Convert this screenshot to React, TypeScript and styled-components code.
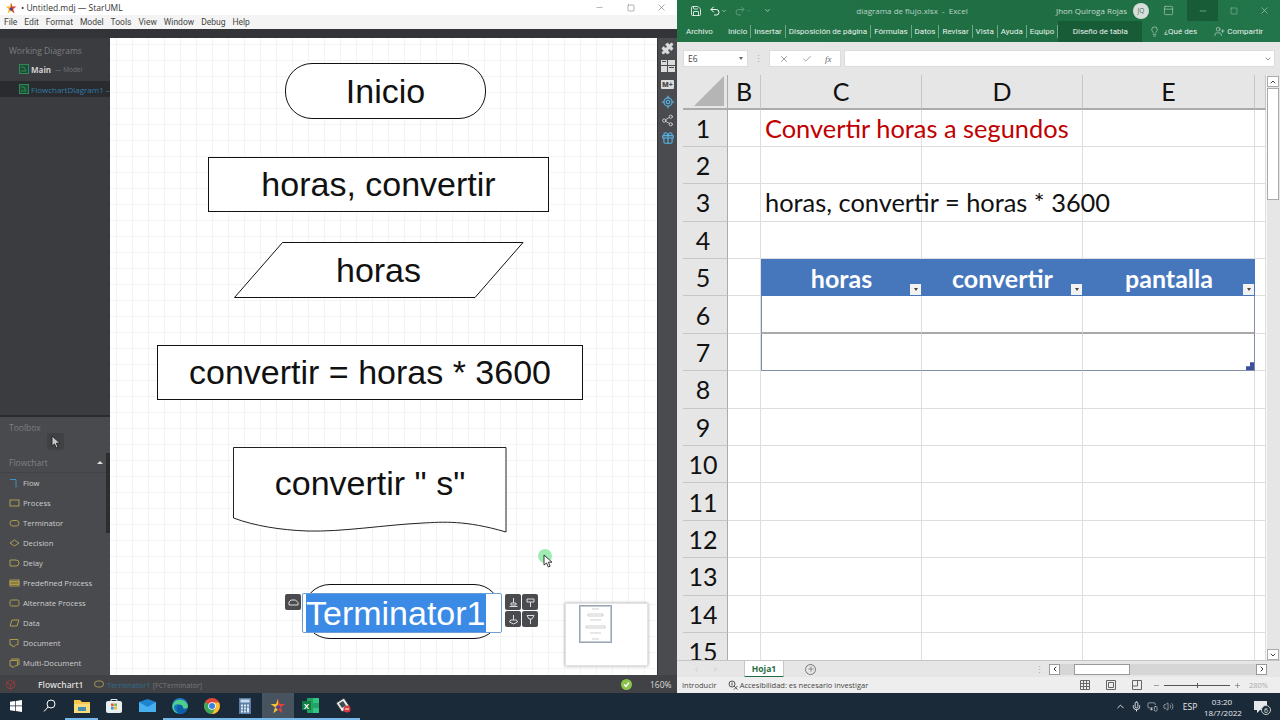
import React from 'react';
import styled, { createGlobalStyle } from 'styled-components';
import {
  Check,
  ChevronUp,
  ChevronDown,
  ChevronLeft,
  ChevronRight,
  Gift,
  Lightbulb,
  LocateFixed,
  Mic,
  Minus,
  MonitorSmartphone,
  PanelTop,
  Plus,
  Puzzle,
  Redo2,
  Save,
  Share2,
  Square,
  UserPlus,
  Undo2,
  Volume2,
  X,
} from 'lucide-react';

const GlobalStyle = createGlobalStyle`
  html, body {
    margin: 0;
    padding: 0;
    width: 1280px;
    height: 720px;
    overflow: hidden;
    font-family: "Open Sans", "Liberation Sans", sans-serif;
  }
  * { box-sizing: border-box; }
`;

const Screen = styled.div`
  width: 1280px;
  height: 720px;
  display: flex;
  flex-direction: column;
  overflow: hidden;
`;

const Desktop = styled.div`
  height: 693px;
  display: flex;
`;

/* ---------- StarUML window ---------- */

const UmlWindow = styled.div`
  width: 677px;
  display: flex;
  flex-direction: column;
  background: #fff;
`;

const UmlTitle = styled.div`
  height: 15px;
  display: flex;
  align-items: center;
  padding-left: 5px;
  gap: 4px;
  font-size: 8.5px;
  color: #333;
  background: #fff;
`;

const WinButtons = styled.div`
  margin-left: auto;
  display: flex;
  color: #444;
`;

const WinButton = styled.span`
  width: 31px;
  height: 10px;
  display: flex;
  align-items: center;
  justify-content: center;
`;

const UmlMenu = styled.div`
  height: 14px;
  display: flex;
  align-items: center;
  gap: 7px;
  padding-left: 4px;
  font-family: Roboto, "Open Sans", sans-serif;
  font-size: 8.5px;
  color: #444;
  background: #f4f4f4;
`;

const UmlGap = styled.div`
  height: 9px;
  background: #333437;
`;

const UmlBody = styled.div`
  flex: 1;
  display: flex;
  min-height: 0;
`;

const Sidebar = styled.div`
  width: 110px;
  display: flex;
  flex-direction: column;
`;

const WorkingPane = styled.div`
  height: 379px;
  padding-top: 5px;
  background: #3a3c3f;
  border-bottom: 2px solid #2b2c2e;
`;

const PaneTitle = styled.div`
  height: 15px;
  display: flex;
  align-items: center;
  justify-content: space-between;
  padding: 0 9px;
  font-size: 8.5px;
  color: #7c7e81;
`;

const WorkRow = styled.div<{ $active?: boolean }>`
  height: 16px;
  margin-top: ${(p) => (p.$active ? '4px' : '3px')};
  display: flex;
  align-items: center;
  gap: 2px;
  padding-left: 19px;
  font-size: 8px;
  white-space: nowrap;
  overflow: hidden;
  color: ${(p) => (p.$active ? '#2f7ca8' : '#cfcfcf')};
  background: ${(p) => (p.$active ? '#2a2b2e' : 'transparent')};

  svg {
    flex-shrink: 0;
  }
  b {
    font-weight: 700;
  }
  small {
    font-size: 6.5px;
    color: #737578;
    margin-left: 2px;
  }
`;

const ToolPane = styled.div`
  position: relative;
  flex: 1;
  padding-top: 3px;
  background: #494a4d;
`;

const ArrowTool = styled.div`
  width: 17px;
  height: 17px;
  margin: -2px 0 2px 47px;
  display: flex;
  align-items: center;
  justify-content: center;
  border-radius: 2px;
  background: #404144;
`;

const GroupHead = styled.div`
  height: 21px;
  display: flex;
  align-items: center;
  justify-content: space-between;
  padding: 0 7px 0 9px;
  font-size: 8.5px;
  color: #7e8083;
  border-bottom: 1px solid #424346;
  i {
    width: 0;
    height: 0;
    border: 3px solid transparent;
    border-top: 0;
    border-bottom: 3px solid #ddd;
  }
`;

const ToolItem = styled.div`
  height: 20px;
  display: flex;
  align-items: center;
  gap: 3px;
  padding-left: 9px;
  font-size: 7.7px;
  color: #cdcdcd;
  white-space: nowrap;
`;

const ToolThumb = styled.div`
  position: absolute;
  right: 0;
  top: 36px;
  width: 4px;
  height: 80px;
  background: #2d2e30;
`;

const Canvas = styled.div`
  position: relative;
  flex: 1;
  overflow: hidden;
  background-color: #fff;
  background-image: linear-gradient(#f4f4f4 1px, transparent 1px), linear-gradient(90deg, #f4f4f4 1px, transparent 1px);
  background-size: 16px 16px;
  background-position: 6px 6px;
`;

/* node positions are diagram coordinates, relative to the canvas */
const Node = styled.div<{ $x: number; $y: number; $w: number; $h: number; $round?: boolean; $plain?: boolean }>`
  position: absolute;
  left: ${(p) => p.$x}px;
  top: ${(p) => p.$y}px;
  width: ${(p) => p.$w}px;
  height: ${(p) => p.$h}px;
  display: flex;
  align-items: center;
  justify-content: center;
  font-family: "Liberation Sans", Arial, sans-serif;
  font-size: 34px;
  color: #111;
  background: ${(p) => (p.$plain ? 'transparent' : '#fff')};
  border: ${(p) => (p.$plain ? '0' : '1px solid #111')};
  border-radius: ${(p) => (p.$round ? '27px' : '0')};
  svg {
    position: absolute;
    left: 0;
    top: 0;
  }
`;

const NodeLabel = styled.span<{ $up?: number }>`
  position: relative;
  margin-top: ${(p) => -(p.$up ?? 0)}px;
`;

const NodeEditor = styled.div`
  position: absolute;
  left: 192px;
  top: 555px;
  width: 200px;
  height: 40px;
  padding-left: 3px;
  display: flex;
  align-items: center;
  background: #fff;
  border: 1px solid #6f9fd0;
  border-radius: 2px;
  font-family: "Liberation Sans", Arial, sans-serif;
  font-size: 34px;
  span {
    height: 38px;
    line-height: 38px;
    color: #fff;
    background: #3b8ae6;
  }
`;

const Handle = styled.div<{ $x: number; $y: number }>`
  position: absolute;
  left: ${(p) => p.$x}px;
  top: ${(p) => p.$y}px;
  width: 16px;
  height: 16px;
  display: flex;
  align-items: center;
  justify-content: center;
  background: #4a4b4e;
  border-radius: 2px;
`;

const Minimap = styled.div`
  position: absolute;
  left: 455px;
  top: 565px;
  width: 83px;
  height: 63px;
  background: #fff;
  border: 1px solid #e3e3e3;
  box-shadow: 0 0 3px rgba(0, 0, 0, 0.35);
`;

const MinimapView = styled.div`
  position: absolute;
  left: 13px;
  top: 1px;
  width: 33px;
  height: 38px;
  border: 1px solid #9aa7b3;
  box-shadow: inset 0 0 0 1px #c3ccd4;
`;

const Cursor = styled.div`
  position: absolute;
  left: 428px;
  top: 511px;
  width: 14px;
  height: 14px;
  border-radius: 50%;
  background: #a0ecb5;
  svg {
    position: absolute;
    left: 5px;
    top: 5px;
  }
`;

const IconStrip = styled.div`
  width: 20px;
  display: flex;
  flex-direction: column;
  align-items: center;
  padding-top: 1px;
  background: #4a4b4e;
  border-left: 1px solid #333;
`;

const StripIcon = styled.div<{ $blue?: boolean }>`
  height: 18px;
  width: 100%;
  display: flex;
  align-items: center;
  justify-content: center;
  color: ${(p) => (p.$blue ? '#57b3e6' : '#dcdcdc')};
`;

const MdBadge = styled.span`
  padding: 0 1px;
  font-size: 7px;
  line-height: 9px;
  font-weight: 800;
  color: #4a4b4e;
  background: #dcdcdc;
  border-radius: 1px;
`;

const UmlStatus = styled.div`
  height: 18px;
  display: flex;
  align-items: center;
  font-size: 8.5px;
  color: #ddd;
  background: #414245;
`;

const StatusCell = styled.div<{ $w?: number; $end?: boolean }>`
  display: flex;
  align-items: center;
  gap: 3px;
  height: 100%;
  padding: 0 5px;
  ${(p) => (p.$w ? `width: ${p.$w}px;` : '')}
  ${(p) => (p.$end ? 'margin-left: auto;' : '')}
  b { font-weight: 600; }
  em { font-style: normal; color: #2f6d94; font-size: 7.5px; }
  small { color: #77797c; font-size: 7px; }
`;

/* ---------- Excel window ---------- */

const XlWindow = styled.div`
  width: 603px;
  display: flex;
  flex-direction: column;
  background: #e6e6e6;
`;

const Ribbon = styled.div`
  height: 42px;
  background: linear-gradient(90deg, #217346 0%, #1f6e43 60%, #22754a 100%);
  color: #e8f1ec;
`;

const RibbonTop = styled.div`
  height: 21px;
  display: flex;
  align-items: center;
  padding-left: 13px;
`;

const Quick = styled.span<{ $w: number; $dim?: boolean }>`
  width: ${(p) => p.$w}px;
  display: flex;
  align-items: center;
  color: ${(p) => (p.$dim ? '#5d9c78' : '#fff')};
`;

const DocTitle = styled.div`
  width: 240px;
  margin-left: 16px;
  text-align: center;
  font-size: 8px;
  color: #b9d5c5;
  white-space: nowrap;
`;

const UserName = styled.div`
  margin-left: 24px;
  width: 75px;
  font-size: 8px;
  color: #c6dccf;
  white-space: nowrap;
`;

const Avatar = styled.div`
  width: 16px;
  height: 16px;
  margin-left: 2px;
  display: flex;
  align-items: center;
  justify-content: center;
  border-radius: 50%;
  font-size: 6.5px;
  color: #4d6b5a;
  background: #d6dfda;
`;

const TopControl = styled.div<{ $w?: number; $dark?: boolean }>`
  width: ${(p) => p.$w ?? 31}px;
  height: 21px;
  display: flex;
  align-items: center;
  justify-content: center;
  color: #c6dccf;
  background: ${(p) => (p.$dark ? '#185c37' : 'transparent')};
`;

const RibbonTabs = styled.div`
  height: 21px;
  display: flex;
  align-items: center;
  padding-left: 6px;
  font-family: Roboto, "Open Sans", sans-serif;
  font-size: 8px;
  white-space: nowrap;
`;

const RibbonTab = styled.div<{ $sep?: boolean; $w?: number }>`
  ${(p) => (p.$w ? `width: ${p.$w}px;` : '')}
  height: 13px;
  line-height: 13px;
  padding: 0 3px;
  ${(p) => (p.$sep ? 'border-right: 1px solid #6fa78a;' : '')}
`;

const ContextTab = styled.div`
  width: 84px;
  height: 21px;
  display: flex;
  align-items: center;
  justify-content: center;
  background: #185c37;
`;

const RibbonAction = styled.div<{ $w: number; $pad: number }>`
  width: ${(p) => p.$w}px;
  display: flex;
  align-items: center;
  gap: 2px;
  padding-left: ${(p) => p.$pad}px;
`;

const FormulaBar = styled.div`
  height: 33px;
  display: flex;
  align-items: center;
  padding: 0 5px 0 6px;
  font-size: 8.5px;
  color: #444;
`;

const NameBox = styled.div`
  width: 65px;
  height: 17px;
  display: flex;
  align-items: center;
  justify-content: space-between;
  padding: 0 4px;
  background: #fff;
  border: 1px solid #dcdcdc;
  i {
    width: 0;
    height: 0;
    border: 2.5px solid transparent;
    border-bottom: 0;
    border-top: 3px solid #666;
  }
`;

const Dots = styled.div`
  width: 21px;
  text-align: center;
  font-size: 9px;
  line-height: 9px;
  color: #aaa;
`;

const FxButtons = styled.div`
  width: 72px;
  height: 17px;
  display: flex;
  align-items: center;
  justify-content: space-around;
  padding: 0 2px;
  background: #fff;
  border: 1px solid #dcdcdc;
  color: #666;
  em {
    font-family: "Liberation Serif", serif;
    font-size: 9px;
  }
`;

const FormulaInput = styled.div`
  flex: 1;
  height: 17px;
  margin-left: 3px;
  display: flex;
  align-items: center;
  justify-content: flex-end;
  padding-right: 2px;
  color: #555;
  background: #fff;
  border: 1px solid #dcdcdc;
`;

const SheetArea = styled.div`
  height: 585px;
  display: flex;
`;

const Sheet = styled.div`
  flex: 1;
  overflow: hidden;
  padding-left: 6px;
  display: grid;
  grid-template-columns: 45px 33px 161px 161px 172px 11px;
  grid-template-rows: 34.5px;
  grid-auto-rows: 37.4px;
  font-family: Lato, "Open Sans", sans-serif;
  font-size: 25px;
  color: #111;
  background: #e6e6e6;
`;

const Corner = styled.div`
  position: relative;
  background: #e6e6e6;
  border-right: 1px solid #ababab;
  border-bottom: 2px solid #ababab;
  &::after {
    content: '';
    position: absolute;
    right: 3px;
    bottom: 2px;
    width: 0;
    height: 0;
    border-left: 30px solid transparent;
    border-bottom: 30px solid #b5b5b5;
  }
`;

const ColHead = styled.div`
  display: flex;
  align-items: center;
  justify-content: center;
  background: #e6e6e6;
  border-right: 1px solid #c6c6c6;
  border-bottom: 2px solid #ababab;
`;

const RowHead = styled.div`
  display: flex;
  align-items: center;
  justify-content: center;
  padding-right: 4px;
  background: #e6e6e6;
  border-right: 1px solid #ababab;
  border-bottom: 1px solid #c6c6c6;
`;

const Cell = styled.div<{ $red?: boolean; $left?: boolean; $right?: boolean; $under?: string; $tall?: boolean; $spill?: boolean }>`
  position: relative;
  ${(p) => (p.$spill ? 'z-index: 1; font-size: 25.4px;' : '')}
  display: flex;
  align-items: center;
  padding-left: 4px;
  white-space: nowrap;
  background: #fff;
  color: ${(p) => (p.$red ? '#c00000' : '#111')};
  border-right: 1px solid ${(p) => (p.$right ? '#7f8ea3' : '#dedede')};
  border-bottom: ${(p) => (p.$tall ? '2px' : '1px')} solid ${(p) => p.$under ?? '#dedede'};
  ${(p) => (p.$left ? 'border-left: 1px solid #7f8ea3;' : '')}
`;

const HeadCell = styled.div`
  position: relative;
  display: flex;
  align-items: center;
  justify-content: center;
  font-weight: 700;
  color: #fff;
  background: #4677bd;
`;

const FilterButton = styled.span`
  position: absolute;
  right: 1px;
  bottom: 1px;
  width: 11px;
  height: 11px;
  display: flex;
  align-items: center;
  justify-content: center;
  background: #f2f2f2;
  &::after {
    content: '';
    border: 2.5px solid transparent;
    border-bottom: 0;
    border-top: 3px solid #444;
  }
`;

const ResizeCorner = styled.span`
  position: absolute;
  right: 0;
  bottom: 0;
  width: 8px;
  height: 8px;
  background: #3d4f9f;
  clip-path: polygon(100% 0, 100% 100%, 0 100%, 0 50%, 50% 50%, 50% 0);
`;

const VScroll = styled.div`
  width: 14px;
  display: flex;
  flex-direction: column;
  padding: 1px 1px 0 0;
  background: #e6e6e6;
  border-left: 1px solid #f7f7f7;
`;

const ScrollButton = styled.div`
  height: 11px;
  display: flex;
  align-items: center;
  justify-content: center;
  color: #444;
  background: #fff;
  border: 1px solid #aaa;
`;

const VThumb = styled.div`
  height: 112px;
  margin: 1px 0 auto;
  background: #fff;
  border: 1px solid #aaa;
`;

const SheetTabs = styled.div`
  height: 17px;
  display: flex;
  align-items: center;
  padding-left: 10px;
  font-size: 8.5px;
  color: #555;
  border-top: 1px solid #c6c6c6;
`;

const SheetNav = styled.span`
  width: 19px;
  display: flex;
  justify-content: center;
  color: #b9b9b9;
`;

const HojaTab = styled.div`
  width: 40px;
  height: 17px;
  margin-left: 19px;
  display: flex;
  align-items: center;
  justify-content: center;
  font-weight: 700;
  color: #1f6e43;
  background: #fff;
  border: 1px solid #c6c6c6;
  border-top: 0;
  border-bottom: 2px solid #1f6e43;
`;

const AddSheet = styled.div`
  width: 11px;
  height: 11px;
  margin-left: 21px;
  display: flex;
  align-items: center;
  justify-content: center;
  border: 1px solid #777;
  border-radius: 50%;
  color: #666;
`;

const TabDots = styled.span`
  margin-left: auto;
  width: 12px;
  text-align: center;
  font-size: 9px;
  line-height: 9px;
  color: #aaa;
`;

const HScroll = styled.div`
  margin-left: 4px;
  margin-right: 13px;
  width: 218px;
  height: 11px;
  display: flex;
  background: #d6d6d6;
`;

const HButton = styled.div`
  width: 11px;
  height: 11px;
  display: flex;
  align-items: center;
  justify-content: center;
  background: #fff;
  border: 1px solid #999;
  color: #333;
`;

const HThumb = styled.div`
  width: 56px;
  margin-left: 14px;
  margin-right: auto;
  background: #fff;
  border: 1px solid #999;
`;

const XlStatus = styled.div`
  height: 16px;
  display: flex;
  align-items: center;
  padding-left: 5px;
  font-size: 7.5px;
  color: #444;
  background: #eee;
`;

const A11yIcon = styled.svg`
  margin: 0 2px 0 11px;
`;

const StatusTools = styled.div`
  margin-left: auto;
  display: flex;
  align-items: center;
  padding-right: 9px;
  color: #666;
`;

const ViewIcon = styled.span`
  width: 26px;
  display: flex;
  align-items: center;
  justify-content: center;
`;

const ZoomMinus = styled.span`
  margin-left: 3px;
  display: flex;
`;

const ZoomTrack = styled.div`
  position: relative;
  width: 66px;
  height: 1px;
  margin: 0 4px;
  background: #555;
  &::after {
    content: '';
    position: absolute;
    left: 33px;
    top: -2px;
    width: 1px;
    height: 5px;
    background: #555;
  }
`;

const ZoomLabel = styled.span`
  width: 30px;
  padding-left: 8px;
  color: #aaa;
`;

/* ---------- Taskbar ---------- */

const Taskbar = styled.div`
  height: 27px;
  display: flex;
  align-items: stretch;
  background: #1b2a39;
  color: #e6e9ec;
`;

const TaskItem = styled.div<{ $open?: boolean; $active?: boolean }>`
  width: 32.7px;
  display: flex;
  align-items: center;
  justify-content: center;
  background: ${(p) => (p.$active ? '#47545f' : 'transparent')};
  border-bottom: 2px solid ${(p) => (p.$open ? '#76b9ed' : 'transparent')};
  background-clip: padding-box;
`;

const Tray = styled.div`
  margin-left: auto;
  display: flex;
  align-items: center;
  font-size: 8.5px;
`;

const TrayIcon = styled.span<{ $w: number }>`
  width: ${(p) => p.$w}px;
  display: flex;
  align-items: center;
  justify-content: center;
`;

const Clock = styled.div`
  width: 36px;
  text-align: center;
  white-space: nowrap;
  line-height: 11px;
  font-size: 8px;
`;

const Notify = styled.div`
  position: relative;
  width: 40px;
  display: flex;
  justify-content: center;
  b {
    position: absolute;
    left: 21px;
    top: 4px;
    width: 10px;
    height: 10px;
    line-height: 9px;
    text-align: center;
    font-weight: 400;
    font-size: 7px;
    border: 1px solid #ccc;
    border-radius: 50%;
    background: #1b2a39;
  }
`;

/* ---------- drawings ---------- */

const StarLogo = ({ size = 14 }: { size?: number }) => (
  <svg width={size} height={size} viewBox="0 0 24 24">
    <path d="M12 1l3 8h8l-6.500 5 2.500 9-7-5.500z" fill="#d8433a" />
    <path d="M12 1l-3 8H1l6.500 5L5 23l7-5.500z" fill="#f2c230" />
    <path d="M12 10l4 4-4 4-4-4z" fill="#5b3f8f" />
  </svg>
);

const DiagramIcon = () => (
  <svg width="10" height="10" viewBox="0 0 10 10" fill="none" stroke="#2f8a57" strokeWidth="1">
    <rect x="0.500" y="0.500" width="9" height="9" fill="#1d4d35" />
    <path d="M2 3h3M5 3l2 4M2 7h5" />
  </svg>
);

const PanelsGlyph = () => (
  <svg width="14" height="12" viewBox="0 0 14 12" fill="#dcdcdc">
    <path d="M0 0h6v5H0zM7 0h7v5H7zM0 6h6v6H0zM7 6h7v6H7z" />
    <path d="M1 1h4v1H1zM8 7h5v1H8z" fill="#4a4b4e" />
  </svg>
);

const toolShapes: Record<string, React.ReactNode> = {
  Flow: <path d="M1 1.500h6v8" stroke="#3f8fc9" />,
  Process: <rect x="1" y="2" width="9" height="6" />,
  Terminator: <rect x="1" y="2.500" width="9" height="5.500" rx="2.700" />,
  Decision: <path d="M1 5l4.500-3L10 5l-4.500 3z" />,
  Delay: <path d="M1 2h6a3 3 0 010 6H1z" />,
  'Predefined Process': (
    <>
      <rect x="1" y="2" width="9" height="6" />
      <path d="M1 3.500h9v3H1z" fill="#8c7d3a" />
    </>
  ),
  'Alternate Process': <rect x="1" y="2" width="9" height="6" rx="1.500" />,
  Data: <path d="M3 2h7L8 8H1z" />,
  Document: <path d="M1 1.500h8v5c-3 0-3 2-5 2.500L3 7H1z" />,
  'Multi-Document': <path d="M2 1h8v6M1 2.500h7.500v5c-3 0-3 1.500-5 2L3 8H1z" />,
};

const toolNames = Object.keys(toolShapes);

const ToolGlyph = ({ name }: { name: string }) => (
  <svg width="11" height="11" viewBox="0 0 11 11" fill="none" stroke="#ad9c4e" strokeWidth="1">
    {toolShapes[name]}
  </svg>
);

const HandleGlyph = ({ d }: { d: string }) => (
  <svg width="11" height="11" viewBox="0 0 11 11" fill="none" stroke="#ddd" strokeWidth="1">
    <path d={d} />
  </svg>
);

const WinLogo = () => (
  <svg width="12" height="12" viewBox="0 0 12 12" fill="#fff">
    <path d="M0 1.700l5-.7v4.600H0zM5.700.900L12 0v5.600H5.700zM0 6.300h5v4.700l-5-.7zM5.700 6.300H12V12l-6.300-.9z" />
  </svg>
);

const SearchGlyph = () => (
  <svg width="13" height="13" viewBox="0 0 13 13" fill="none" stroke="#fff" strokeWidth="1">
    <circle cx="8" cy="5" r="4" />
    <path d="M5 8l-4 4.500" />
  </svg>
);

const FolderGlyph = () => (
  <svg width="16" height="14" viewBox="0 0 16 14">
    <path d="M0 1h6l2 2h8v11H0z" fill="#f6c64f" />
    <path d="M0 5h16v9H0z" fill="#fbdc7a" />
    <path d="M4 8h8v4H4z" fill="#3f8fb7" />
  </svg>
);

const StoreGlyph = () => (
  <svg width="16" height="15" viewBox="0 0 16 15">
    <path d="M5 3V1.500h6V3" fill="none" stroke="#dfe6ea" />
    <rect y="3" width="16" height="12" rx="2" fill="#e9eef1" />
    <rect x="5" y="5.500" width="2.700" height="2.700" fill="#e8562f" />
    <rect x="8.300" y="5.500" width="2.700" height="2.700" fill="#7cb83b" />
    <rect x="5" y="8.800" width="2.700" height="2.700" fill="#2c9be0" />
    <rect x="8.300" y="8.800" width="2.700" height="2.700" fill="#f4b81c" />
  </svg>
);

const MailGlyph = () => (
  <svg width="17" height="13" viewBox="0 0 17 13">
    <path d="M0 3l8.500-3L17 3v10H0z" fill="#1f84d0" />
    <path d="M0 3l8.500 5L17 3v10H0z" fill="#48b0ef" />
  </svg>
);

const EdgeGlyph = () => (
  <svg width="16" height="16" viewBox="0 0 16 16">
    <circle cx="8" cy="8" r="8" fill="#1a78c2" />
    <path d="M1 6c2-6 13-6 15 2 0 3-4 3-5 1.500C10 7 6 5 3 7c-2 2-1 6 3 8C2 15-1 10 1 6z" fill="#4fd08a" />
    <path d="M5 9c1-3 6-3 6 1-2 1 3 2 4 .5C14 14 11 16 8 15.800 5 15 4 12 5 9z" fill="#0d5fa8" />
  </svg>
);

const ChromeGlyph = () => (
  <svg width="16" height="16" viewBox="0 0 16 16">
    <circle cx="8" cy="8" r="8" fill="#e2483a" />
    <path d="M8 8L1.100 4A8 8 0 008 16l3.500-6z" fill="#3aa757" />
    <path d="M8 4.500h7A8 8 0 018 16l3.500-6z" fill="#f9c32c" />
    <circle cx="8" cy="8" r="3.800" fill="#fff" />
    <circle cx="8" cy="8" r="3" fill="#3a80ea" />
  </svg>
);

const CalcGlyph = () => (
  <svg width="12" height="16" viewBox="0 0 12 16">
    <rect width="12" height="16" fill="#5d7ea6" />
    <rect x="1.500" y="1.500" width="9" height="3" fill="#c7ddf0" />
    <path d="M2 6.500h2v2H2zM5 6.500h2v2H5zM8 6.500h2v2H8zM2 9.500h2v2H2zM5 9.500h2v2H5zM8 9.500h2v5H8zM2 12.500h2v2H2zM5 12.500h2v2H5z" fill="#dce8f2" />
  </svg>
);

const ExcelGlyph = () => (
  <svg width="17" height="15" viewBox="0 0 17 15">
    <rect x="5" width="12" height="15" rx="1" fill="#21a366" />
    <path d="M11 0h6v5h-6zM11 10h6v5h-6z" fill="#33c481" />
    <rect y="3" width="9" height="9" fill="#107c41" />
    <text x="4.500" y="10.500" textAnchor="middle" fontSize="8" fontWeight="700" fill="#fff" fontFamily="Liberation Sans">
      X
    </text>
  </svg>
);

const SnipGlyph = () => (
  <svg width="16" height="15" viewBox="0 0 16 15">
    <path d="M1 5l8-5 6 9-8 5z" fill="#e9ecee" stroke="#333" />
    <path d="M4 5.500l4-2.500 3 4.500-4 2.500z" fill="#3a4f52" />
    <circle cx="12" cy="11" r="3.500" fill="#d63a3a" />
    <path d="M10 11h4" stroke="#fff" />
  </svg>
);

const ArrowCursor = ({ fill = '#fff' }: { fill?: string }) => (
  <svg width="10" height="14" viewBox="0 0 10 14">
    <path d="M1 1v10l2.500-2 1.800 4 1.800-.8-1.800-4H9z" fill={fill} stroke="#222" strokeWidth="0.900" />
  </svg>
);

/* ---------- data ---------- */

const menuItems = ['File', 'Edit', 'Format', 'Model', 'Tools', 'View', 'Window', 'Debug', 'Help'];
const ribbonTabs: { label: string; w?: number; sep?: boolean }[] = [
  { label: 'Archivo', w: 42 },
  { label: 'Inicio', sep: true },
  { label: 'Insertar', sep: true },
  { label: 'Disposición de página', sep: true },
  { label: 'Fórmulas', sep: true },
  { label: 'Datos', sep: true },
  { label: 'Revisar', sep: true },
  { label: 'Vista', sep: true },
  { label: 'Ayuda', sep: true },
  { label: 'Equipo', sep: true },
];
const columns = ['B', 'C', 'D', 'E', ''];
const rowNumbers = Array.from({ length: 15 }, (_, i) => i + 1);
const tableHeads = ['horas', 'convertir', 'pantalla'];

const SheetRow = ({ n }: { n: number }) => {
  if (n === 5) {
    return (
      <>
        <RowHead>{n}</RowHead>
        <Cell />
        {tableHeads.map((h) => (
          <HeadCell key={h}>
            {h}
            <FilterButton />
          </HeadCell>
        ))}
        <Cell />
      </>
    );
  }
  if (n === 6 || n === 7) {
    const under = n === 6 ? '#a9a9a9' : '#7f8ea3';
    return (
      <>
        <RowHead>{n}</RowHead>
        <Cell />
        <Cell $left $under={under} $tall={n === 6} />
        <Cell $under={under} $tall={n === 6} />
        <Cell $right $under={under} $tall={n === 6}>
          {n === 7 && <ResizeCorner />}
        </Cell>
        <Cell />
      </>
    );
  }
  const text = n === 1 ? 'Convertir horas a segundos' : n === 3 ? 'horas, convertir = horas * 3600' : '';
  return (
    <>
      <RowHead>{n}</RowHead>
      <Cell />
      <Cell $red={n === 1} $spill={!!text}>
        {text}
      </Cell>
      <Cell />
      <Cell />
      <Cell />
    </>
  );
};

const App = () => {
  return (
    <Screen>
      <GlobalStyle />
      <Desktop>
        <UmlWindow>
          <UmlTitle>
            <StarLogo size={12} />
            <span>• Untitled.mdj — StarUML</span>
            <WinButtons>
              <WinButton>
                <Minus size={9} strokeWidth={1} />
              </WinButton>
              <WinButton>
                <Square size={8} strokeWidth={1.200} />
              </WinButton>
              <WinButton>
                <X size={11} strokeWidth={1} />
              </WinButton>
            </WinButtons>
          </UmlTitle>
          <UmlMenu>
            {menuItems.map((m) => (
              <span key={m}>{m}</span>
            ))}
          </UmlMenu>
          <UmlGap />
          <UmlBody>
            <Sidebar>
              <WorkingPane>
                <PaneTitle>Working Diagrams</PaneTitle>
                <WorkRow>
                  <DiagramIcon />
                  <b>Main</b>
                  <small>— Model</small>
                </WorkRow>
                <WorkRow $active>
                  <DiagramIcon />
                  <span>FlowchartDiagram1 —</span>
                </WorkRow>
              </WorkingPane>
              <ToolPane>
                <PaneTitle>Toolbox</PaneTitle>
                <ArrowTool>
                  <ArrowCursor fill="#c9c9c9" />
                </ArrowTool>
                <GroupHead>
                  Flowchart
                  <i />
                </GroupHead>
                {toolNames.map((t) => (
                  <ToolItem key={t}>
                    <ToolGlyph name={t} />
                    {t}
                  </ToolItem>
                ))}
                <ToolThumb />
              </ToolPane>
            </Sidebar>
            <Canvas>
              <Node $x={175} $y={25} $w={201} $h={56} $round>
                <NodeLabel>Inicio</NodeLabel>
              </Node>
              <Node $x={98} $y={119} $w={341} $h={55}>
                <NodeLabel>horas, convertir</NodeLabel>
              </Node>
              <Node $x={123} $y={204} $w={291} $h={56} $plain>
                <svg width="291" height="56" viewBox="0 0 291 56">
                  <path d="M49.500.500H290L242 55.500H1.500z" fill="#fff" stroke="#111" />
                </svg>
                <NodeLabel>horas</NodeLabel>
              </Node>
              <Node $x={47} $y={307} $w={426} $h={55}>
                <NodeLabel>convertir = horas * 3600</NodeLabel>
              </Node>
              <Node $x={123} $y={409} $w={274} $h={86} $plain>
                <svg width="274" height="86" viewBox="0 0 274 86">
                  <path
                    d="M.500.500H273V85C232 73 210 75 190 76 150 78 110 85 74 84 48 83 22 79 .500 71z"
                    fill="#fff"
                    stroke="#222"
                  />
                </svg>
                <NodeLabel $up={14}>convertir " s"</NodeLabel>
              </Node>
              <Node $x={193} $y={546} $w={198} $h={55} $round />
              <NodeEditor>
                <span>Terminator1</span>
              </NodeEditor>
              <Handle $x={175} $y={556}>
                <HandleGlyph d="M1 8h9V5.500L7.500 3H3L1 5z" />
              </Handle>
              <Handle $x={395} $y={556}>
                <HandleGlyph d="M5.500 1v5M3 6h5v2H3zM1.500 9.500h8" />
              </Handle>
              <Handle $x={412} $y={556}>
                <HandleGlyph d="M2 2h7v3H2zM5.500 5v5" />
              </Handle>
              <Handle $x={395} $y={573}>
                <HandleGlyph d="M5.500 1v5M2.500 6h6l1 2-4 2-4-2z" />
              </Handle>
              <Handle $x={412} $y={573}>
                <HandleGlyph d="M2 1.500h7L7 5H4zM5.500 5v5" />
              </Handle>
              <Minimap>
                <MinimapView>
                  <svg width="31" height="36" viewBox="0 0 31 36" fill="none" stroke="#bbb" strokeWidth="0.700">
                    <path d="M12 3h7M8 8h15v2H8zM10 14h11M6 20h19v2H6zM10 27h11M12 33h7" />
                  </svg>
                </MinimapView>
              </Minimap>
              <Cursor>
                <ArrowCursor />
              </Cursor>
            </Canvas>
            <IconStrip>
              <StripIcon>
                <Puzzle size={13} fill="#dcdcdc" strokeWidth={1} />
              </StripIcon>
              <StripIcon>
                <PanelsGlyph />
              </StripIcon>
              <StripIcon>
                <MdBadge>M+</MdBadge>
              </StripIcon>
              <StripIcon $blue>
                <LocateFixed size={14} strokeWidth={2} />
              </StripIcon>
              <StripIcon>
                <Share2 size={13} strokeWidth={1.500} />
              </StripIcon>
              <StripIcon $blue>
                <Gift size={14} strokeWidth={2} />
              </StripIcon>
            </IconStrip>
          </UmlBody>
          <UmlStatus>
            <StatusCell $w={33}>
              <svg width="11" height="11" viewBox="0 0 12 12" fill="none" stroke="#9c3b3b" strokeWidth="1">
                <path d="M6 1l4.500 2.500v5L6 11 1.500 8.500v-5zM1.500 3.500L6 6l4.500-2.500M6 6v5" />
              </svg>
            </StatusCell>
            <StatusCell $w={56}>
              <b>Flowchart1</b>
            </StatusCell>
            <StatusCell>
              <svg width="10" height="8" viewBox="0 0 10 8" fill="none" stroke="#a09455">
                <rect x="0.500" y="1" width="9" height="6" rx="3" />
              </svg>
              <span>
                <em>Terminator1</em> <small>[FCTerminator]</small>
              </span>
            </StatusCell>
            <StatusCell $end $w={29}>
              <svg width="11" height="11" viewBox="0 0 11 11">
                <circle cx="5.500" cy="5.500" r="5.500" fill="#8bc34a" />
                <path d="M3 5.500l2 2 3-4" fill="none" stroke="#fff" strokeWidth="1.400" />
              </svg>
            </StatusCell>
            <StatusCell $w={32}>160%</StatusCell>
          </UmlStatus>
        </UmlWindow>

        <XlWindow>
          <Ribbon>
            <RibbonTop>
              <Quick $w={19}>
                <Save size={12} strokeWidth={1.600} />
              </Quick>
              <Quick $w={25}>
                <Undo2 size={12} strokeWidth={2} />
                <ChevronDown size={6} />
              </Quick>
              <Quick $w={30} $dim>
                <Redo2 size={12} strokeWidth={2} />
                <ChevronDown size={6} />
              </Quick>
              <Quick $w={12}>
                <ChevronDown size={7} />
              </Quick>
              <DocTitle>diagrama de flujo.xlsx&nbsp; - &nbsp;Excel</DocTitle>
              <UserName>Jhon Quiroga Rojas</UserName>
              <Avatar>JQ</Avatar>
              <TopControl $w={38}>
                <PanelTop size={11} strokeWidth={1.200} />
              </TopControl>
              <TopControl $dark>
                <Minus size={10} strokeWidth={1.200} />
              </TopControl>
              <TopControl>
                <Square size={8} strokeWidth={1.200} />
              </TopControl>
              <TopControl>
                <X size={11} strokeWidth={1.200} />
              </TopControl>
            </RibbonTop>
            <RibbonTabs>
              {ribbonTabs.map((t) => (
                <RibbonTab key={t.label} $w={t.w} $sep={t.sep}>
                  {t.label}
                </RibbonTab>
              ))}
              <ContextTab>Diseño de tabla</ContextTab>
              <RibbonAction $w={67} $pad={7}>
                <Lightbulb size={11} strokeWidth={1.200} />
                <span>&nbsp;¿Qué des</span>
              </RibbonAction>
              <RibbonAction $w={60} $pad={5}>
                <UserPlus size={11} strokeWidth={1.200} />
                <span>Compartir</span>
              </RibbonAction>
            </RibbonTabs>
          </Ribbon>
          <FormulaBar>
            <NameBox>
              E6
              <i />
            </NameBox>
            <Dots>⋮</Dots>
            <FxButtons>
              <X size={10} strokeWidth={1.500} />
              <Check size={10} strokeWidth={1.500} />
              <em>fx</em>
            </FxButtons>
            <FormulaInput>
              <ChevronDown size={8} />
            </FormulaInput>
          </FormulaBar>
          <SheetArea>
            <Sheet>
              <Corner />
              {columns.map((c, i) => (
                <ColHead key={i}>{c}</ColHead>
              ))}
              {rowNumbers.map((n) => (
                <SheetRow key={n} n={n} />
              ))}
            </Sheet>
            <VScroll>
              <ScrollButton>
                <ChevronUp size={8} strokeWidth={3} />
              </ScrollButton>
              <VThumb />
              <ScrollButton>
                <ChevronDown size={8} strokeWidth={3} />
              </ScrollButton>
            </VScroll>
          </SheetArea>
          <SheetTabs>
            <SheetNav>
              <ChevronLeft size={7} />
            </SheetNav>
            <SheetNav>
              <ChevronRight size={7} />
            </SheetNav>
            <HojaTab>Hoja1</HojaTab>
            <AddSheet>
              <Plus size={8} />
            </AddSheet>
            <TabDots>⋮</TabDots>
            <HScroll>
              <HButton>
                <ChevronLeft size={8} strokeWidth={3} />
              </HButton>
              <HThumb />
              <HButton>
                <ChevronRight size={8} strokeWidth={3} />
              </HButton>
            </HScroll>
          </SheetTabs>
          <XlStatus>
            <span>Introducir</span>
            <A11yIcon width="10" height="10" viewBox="0 0 10 10" fill="none" stroke="#555">
              <circle cx="4" cy="4" r="3" />
              <path d="M4 2.500v3M6 6l3.500 3.500M9.500 6L6 9.500" />
            </A11yIcon>
            <span>Accesibilidad: es necesario investigar</span>
            <StatusTools>
              <ViewIcon>
                <svg width="10" height="10" viewBox="0 0 10 10" fill="none" stroke="#666">
                  <path d="M.5.500h9v9h-9zM.5 3.500h9M.5 6.500h9M3.500.5v9M6.500.5v9" />
                </svg>
              </ViewIcon>
              <ViewIcon>
                <svg width="10" height="10" viewBox="0 0 10 10" fill="none" stroke="#666">
                  <path d="M.5.500h9v9h-9zM2.500 2.500h5v5h-5z" />
                </svg>
              </ViewIcon>
              <ViewIcon>
                <svg width="10" height="10" viewBox="0 0 10 10" fill="none" stroke="#666">
                  <path d="M.5.500h9v9h-9zM.5 6h5V.5" />
                </svg>
              </ViewIcon>
              <ZoomMinus>
                <Minus size={7} />
              </ZoomMinus>
              <ZoomTrack />
              <Plus size={7} />
              <ZoomLabel>280%</ZoomLabel>
            </StatusTools>
          </XlStatus>
        </XlWindow>
      </Desktop>
      <Taskbar>
        <TaskItem>
          <WinLogo />
        </TaskItem>
        <TaskItem>
          <SearchGlyph />
        </TaskItem>
        <TaskItem $open>
          <FolderGlyph />
        </TaskItem>
        <TaskItem>
          <StoreGlyph />
        </TaskItem>
        <TaskItem>
          <MailGlyph />
        </TaskItem>
        <TaskItem $open>
          <EdgeGlyph />
        </TaskItem>
        <TaskItem $open>
          <ChromeGlyph />
        </TaskItem>
        <TaskItem $open>
          <CalcGlyph />
        </TaskItem>
        <TaskItem $open $active>
          <StarLogo size={16} />
        </TaskItem>
        <TaskItem $open>
          <ExcelGlyph />
        </TaskItem>
        <TaskItem $open>
          <SnipGlyph />
        </TaskItem>
        <Tray>
          <TrayIcon $w={16}>
            <ChevronUp size={11} />
          </TrayIcon>
          <TrayIcon $w={16}>
            <Mic size={11} />
          </TrayIcon>
          <TrayIcon $w={16}>
            <MonitorSmartphone size={11} strokeWidth={1.200} />
          </TrayIcon>
          <TrayIcon $w={16}>
            <Volume2 size={11} strokeWidth={1.200} />
          </TrayIcon>
          <TrayIcon $w={28}>ESP</TrayIcon>
          <Clock>
            03:20
            <br />
            18/7/2022
          </Clock>
          <Notify>
            <svg width="13" height="12" viewBox="0 0 13 12" fill="#e6e9ec">
              <path d="M0 0h13v9H6l-3 3V9H0z" />
            </svg>
            <b>6</b>
          </Notify>
        </Tray>
      </Taskbar>
    </Screen>
  );
};

export default App;
